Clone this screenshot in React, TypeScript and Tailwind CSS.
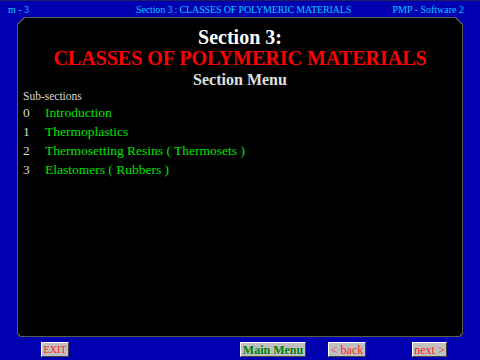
import React from "react";

const bevel =
  "polygon(7px 0, calc(100% - 7px) 0, 100% 7px, 100% calc(100% - 3px), calc(100% - 3px) 100%, 3px 100%, 0 calc(100% - 3px), 0 7px)";

function NavButton({ label, className }: { label: string; className: string }) {
  return (
    <button
      className={`h-[15px] bg-[#c0c0c0] border border-t-white border-l-white border-b-[#404040] border-r-[#404040] leading-none flex items-center justify-center ${className}`}
    >
      {label}
    </button>
  );
}

export default function App() {
  const items = [
    "Introduction",
    "Thermoplastics",
    "Thermosetting Resins ( Thermosets )",
    "Elastomers ( Rubbers )",
  ];

  return (
    <div className="w-[480px] h-[360px] bg-[#0000b0] flex flex-col font-['Liberation_Serif',serif] border-t border-[#202060]">
      {/* Top strip */}
      <div className="h-[16px] flex items-center text-[10px] text-[#00c8ff] px-[8px]">
        <span>m - 3</span>
        <span className="ml-[107px] tracking-[-0.15px]">Section 3 : CLASSES OF POLYMERIC MATERIALS</span>
        <span className="ml-auto mr-[8px]">PMP - Software 2</span>
      </div>

      {/* Black panel */}
      <div className="mx-[17px] h-[320px] bg-[#5a5a48] p-px" style={{ clipPath: bevel }}>
        <div className="h-full bg-black flex flex-col pt-[9px]" style={{ clipPath: bevel }}>
          <h1 className="text-center text-white font-bold text-[20px] leading-[20px]">Section 3:</h1>
          <h2 className="text-center text-[#ff0000] font-bold text-[20px] leading-[21px] mt-[1px]">
            CLASSES OF POLYMERIC MATERIALS
          </h2>
          <h3 className="text-center text-[#e0e0e0] font-bold text-[16px] leading-[16px] mt-[3px]">Section Menu</h3>
          <div className="pl-[5px] mt-[2px] text-[11.5px] leading-[12px] text-[#d8d8d8]">Sub-sections</div>
          <ul className="pl-[5px] mt-[2px] flex flex-col">
            {items.map((t, i) => (
              <li key={i} className="flex h-[19px] items-center text-[13.5px]">
                <span className="w-[22px] text-[#d8d8d8]">{i}</span>
                <span className="text-[#00e000]">{t}</span>
              </li>
            ))}
          </ul>
        </div>
      </div>

      {/* Bottom buttons */}
      <div className="flex items-center mt-[5px]">
        <NavButton label="EXIT" className="ml-[41px] w-[28px] text-[10px] text-[#ff2020]" />
        <NavButton label="Main Menu" className="ml-[171px] w-[66px] text-[12px] font-bold text-[#008000]" />
        <NavButton label="< back" className="ml-[22px] w-[38px] text-[12px] text-[#ff2020]" />
        <NavButton label="next >" className="ml-[46px] w-[35px] text-[12px] text-[#ff2020]" />
      </div>
    </div>
  );
}
